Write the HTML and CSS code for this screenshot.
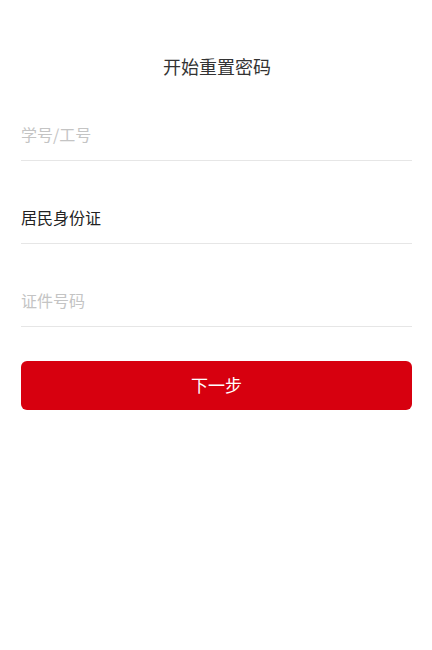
FILE: index.html
```html
<!DOCTYPE html>
<html lang="zh-CN">
<head>
<meta charset="utf-8">
<title>开始重置密码</title>
<link rel="stylesheet" href="styles.css">
</head>
<body>
<div class="page">
  <h1 class="title">开始重置密码</h1>
  <form class="form">
    <div class="field"><input class="input" type="text" placeholder="学号/工号"></div>
    <div class="field"><span class="value">居民身份证</span></div>
    <div class="field"><input class="input" type="text" placeholder="证件号码"></div>
    <button class="btn" type="button">下一步</button>
  </form>
</div>
</body>
</html>
```
FILE: styles.css
```css
html, body {
  margin: 0;
  padding: 0;
  background: #ffffff;
}
.page {
  font-family: "Noto Sans CJK SC", "Noto Sans", sans-serif;
  padding: 54px 20px 0 21px;
}
.title {
  margin: 0;
  font-size: 18px;
  line-height: 24px;
  font-weight: 400;
  color: #333333;
  text-align: center;
  padding-left: 1px;
}
.form {
  margin-top: 32px;
  display: flex;
  flex-direction: column;
  gap: 32px;
}
.field {
  height: 50px;
  box-sizing: border-box;
  padding-bottom: 2px;
  border-bottom: 1px solid #e6e6e6;
  display: flex;
  align-items: center;
}
.field {
  height: 51px;
}
.input {
  border: none;
  outline: none;
  padding: 0;
  margin: 0;
  width: 100%;
  font-family: inherit;
  font-size: 16px;
  color: #222222;
  background: transparent;
}
.input::placeholder {
  color: #c4c4c4;
}
.value {
  font-size: 16px;
  color: #222222;
}
.btn {
  margin-top: 2px;
  height: 49px;
  padding: 0 0 3px;
  border: none;
  border-radius: 6px;
  background: #d7000f;
  color: #ffffff;
  font-family: inherit;
  font-size: 17px;
  cursor: pointer;
}
```
